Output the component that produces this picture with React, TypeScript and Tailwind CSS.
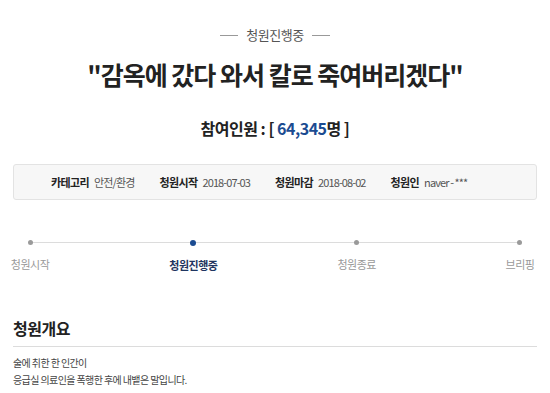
import React from 'react';

const steps = [
  { label: '청원시작', active: false },
  { label: '청원진행중', active: true },
  { label: '청원종료', active: false },
  { label: '브리핑', active: false },
];

const info = [
  { label: '카테고리', value: '안전/환경' },
  { label: '청원시작', value: '2018-07-03' },
  { label: '청원마감', value: '2018-08-02' },
  { label: '청원인', value: 'naver - ***' },
];

export default function App() {
  return (
    <div
      className="w-[550px] h-[393px] overflow-hidden bg-white text-[#333]"
      style={{ fontFamily: '"Noto Sans CJK KR", "Noto Sans", sans-serif' }}
    >
      {/* 상태 */}
      <div className="flex items-center justify-center gap-2 pt-[26px] h-[44px]">
        <span className="w-[18px] h-px bg-[#999]" />
        <span className="text-[13px] leading-[18px] text-[#555] tracking-[-0.5px]">청원진행중</span>
        <span className="w-[18px] h-px bg-[#999]" />
      </div>

      {/* 제목 */}
      <h1 className="mt-[14px] text-center text-[25px] leading-[32px] font-bold text-[#222] tracking-[-1px]">
        "감옥에 갔다 와서 칼로 죽여버리겠다"
      </h1>

      {/* 참여인원 */}
      <p className="mt-[27px] text-center text-[16px] leading-[22px] font-bold text-[#222] tracking-[-0.5px]">
        참여인원 : [ <span className="text-[#1b4b91]">64,345</span>명 ]
      </p>

      {/* 정보 박스 */}
      <div className="mx-[13px] mt-[25px] h-[36px] flex items-center gap-[25px] pl-[37px] rounded-[3px] border border-[#e3e3e3] bg-[#f7f7f7] text-[11px]">
        {info.map((item) => (
          <div key={item.label} className="flex items-center gap-[5px] whitespace-nowrap">
            <span className="font-bold text-[#222] tracking-[-0.6px]">{item.label}</span>
            <span className="text-[#555] tracking-[-0.9px]">{item.value}</span>
          </div>
        ))}
      </div>

      {/* 진행 단계 */}
      <div className="relative mx-[13px] mt-[40px] flex justify-between">
        <div className="absolute left-[17px] right-[18px] top-[2px] h-px bg-[#dcdcdc]" />
        {steps.map((s) => (
          <div key={s.label} className="relative w-[34px] flex flex-col items-center">
            <span
              className={
                s.active
                  ? 'w-[6px] h-[6px] -mt-[0.5px] rounded-full bg-[#1b4b91]'
                  : 'w-[5px] h-[5px] rounded-full bg-[#9a9a9a]'
              }
            />
            <span
              className={
                s.active
                  ? 'mt-[12px] whitespace-nowrap text-[11px] leading-[14px] font-bold text-[#1f3560] tracking-[-0.5px]'
                  : 'mt-[12px] whitespace-nowrap text-[11px] leading-[14px] text-[#999] tracking-[-0.5px]'
              }
            >
              {s.label}
            </span>
          </div>
        ))}
      </div>

      {/* 청원개요 */}
      <div className="mx-[13px] mt-[46px]">
        <h2 className="text-[16px] leading-[20px] font-bold text-[#222] tracking-[-0.5px] pb-[8px] border-b border-[#dcdcdc]">
          청원개요
        </h2>
        <div className="mt-[7px] text-[10px] leading-[17px] text-[#444] tracking-[-0.6px]">
          <p>술에 취한 한 인간이</p>
          <p>응급실 의료인을 폭행한 후에 내뱉은 말입니다.</p>
        </div>
      </div>
    </div>
  );
}
